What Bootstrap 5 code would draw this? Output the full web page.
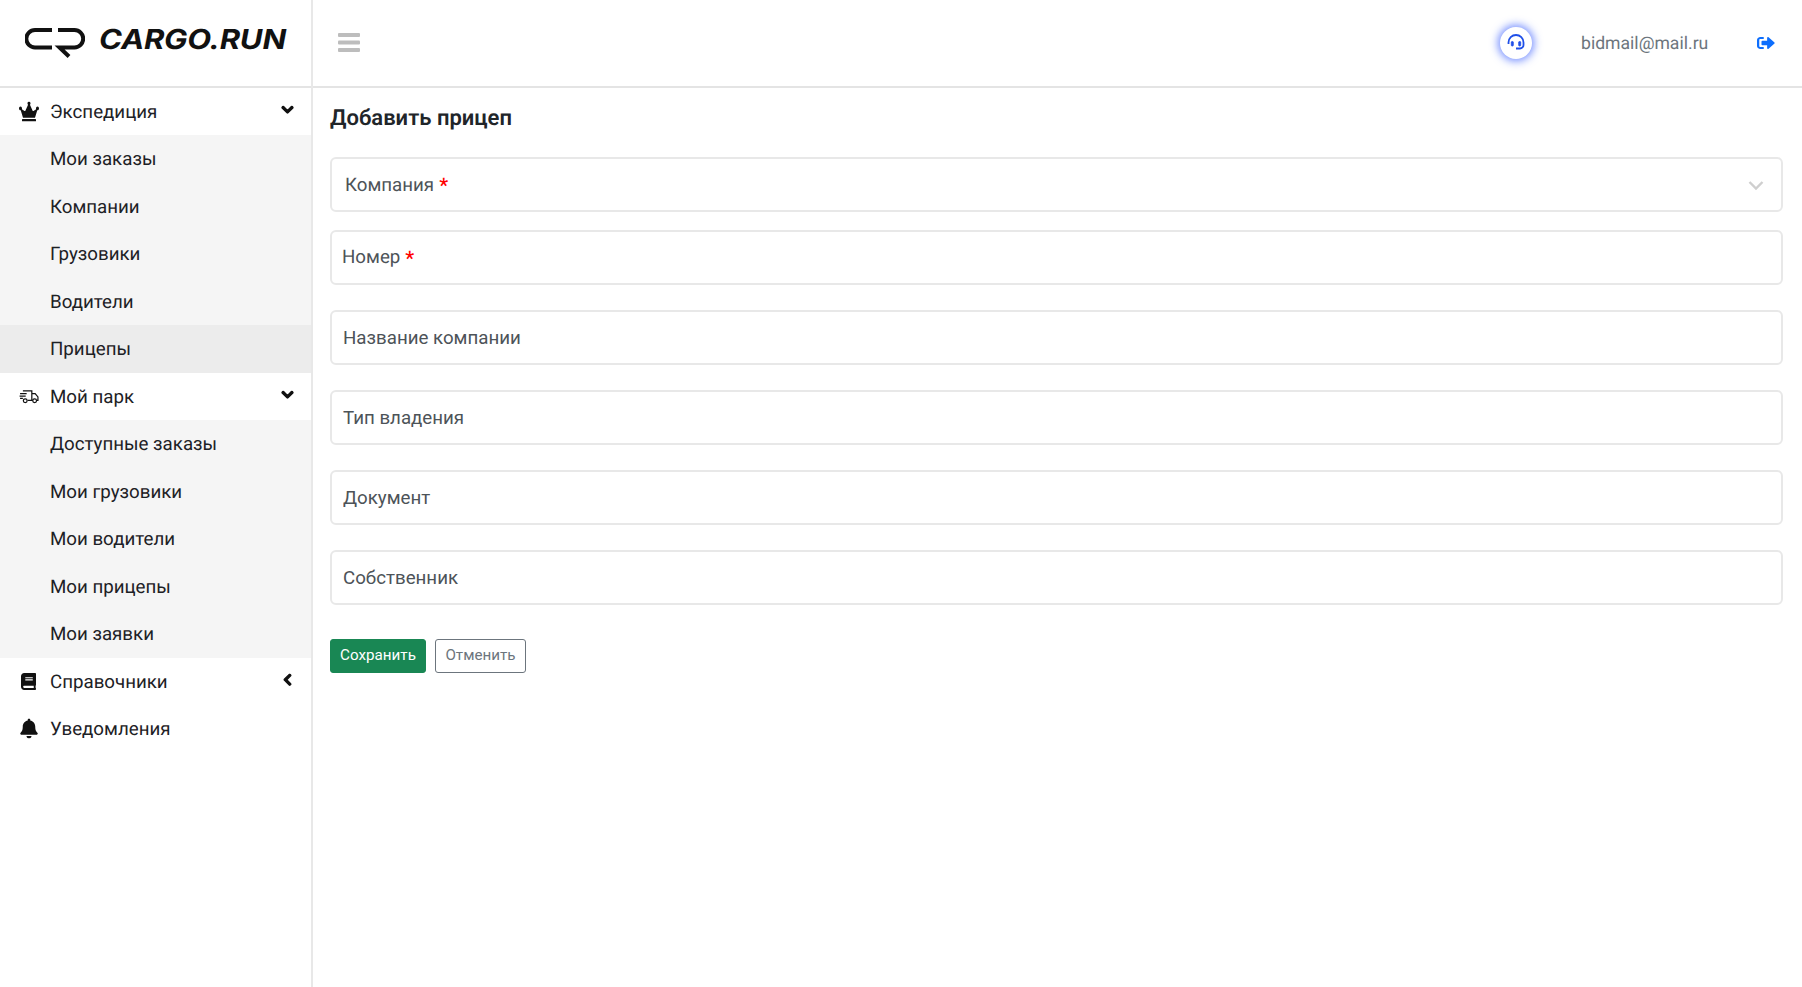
<!DOCTYPE html>
<html lang="ru">
<head>
<meta charset="utf-8">
<title>Добавить прицеп</title>
<link href="https://cdn.jsdelivr.net/npm/bootstrap@5.3.0/dist/css/bootstrap.min.css" rel="stylesheet">
<style>
html,body{height:100%}
body{font-family:Roboto,"Liberation Sans",sans-serif;font-size:18.72px;color:#212529;background:#fff;overflow:hidden;text-rendering:geometricPrecision}
.shell{min-height:987px}
.side{width:313px;flex:none;border-right:2px solid #e8e8e8}
.brand{height:88px;border-bottom:2px solid #e4e4e4;padding:0 0 0 25px;gap:14px}
.brand-text{font-family:Inter,sans-serif;font-weight:700;font-style:italic;font-size:27.5px;letter-spacing:-.2px;color:#111;line-height:1;display:inline-block;transform:scaleX(1.13);transform-origin:left center;margin-bottom:6px}
.brand-mark{margin-bottom:2px}
.side-nav{margin-top:-.5px}
.menu-link{height:47.5px;display:flex;align-items:center;color:#1d2125;text-decoration:none;position:relative;padding-left:50px;padding-top:1px}
.menu-ico{position:absolute;left:18px;top:50%;transform:translateY(-50%);width:21px;height:21px;display:flex;align-items:center;justify-content:center}
.menu-arrow{position:absolute;right:17px;top:50%;transform:translateY(-60%);display:flex}
.sub-wrap{background:#f5f5f5}
.sub-wrap .menu-link.is-active{background:#ececec}
.topbar{height:88px;border-bottom:2px solid #e4e4e4;padding:0 27px 0 25px}
.burger{width:22px;height:19px;margin-bottom:2px}
.help-dot{width:32px;height:32px;border-radius:50%;background:#fff;box-shadow:0 0 8px 2px rgba(40,80,255,.65)}
.user-mail{color:#6c757d;font-size:17.6px;width:127px;margin-left:49px;margin-right:49px;margin-top:2px;white-space:nowrap}
.form-zone{padding:0 19px 0 17px}
.page-title{font-size:22px;font-weight:600;color:#212529;margin:0;line-height:1;padding:20px 0 27px}
.fld{position:relative}
.fld-gap-a{margin-bottom:18px}
.fld-gap-b{margin-bottom:25px}
.fld-input{height:55px;border:2px solid #e8e8e8;border-radius:6px;font-size:18.72px;color:#495057;padding:0 11px}
.fld-input::placeholder{color:#4d5358}
.fld-select{height:55px;border:2px solid #e8e8e8;border-radius:6px;padding:0 14px;background-image:url("data:image/svg+xml,%3csvg xmlns='http://www.w3.org/2000/svg' viewBox='0 0 16 16'%3e%3cpath fill='none' stroke='%23cfcfcf' stroke-width='2.4' d='M1.5 5 8 11.5 14.5 5'/%3e%3c/svg%3e");background-size:16px 16px;background-position:right 17px center}
.fld-label{position:absolute;top:0;bottom:0;left:12px;display:flex;align-items:center;gap:5px;color:#4d5358;pointer-events:none;margin:0}
.fld-label.for-select{left:15px;padding-top:1px}
.req{color:#f00;font-size:20px;font-weight:500;line-height:1}
.btn-row{padding-top:9px;gap:9px}
.btn-save,.btn-cancel{height:34px;font-size:15.2px;padding:0;line-height:1;display:flex;align-items:center;border-radius:3px}
.btn-save{width:96px;justify-content:center;font-weight:400}
.btn-cancel{width:91px;justify-content:center;color:#6c757d;border:1.5px solid #6c757d;background:#fff}
</style>
</head>
<body>
<div class="shell d-flex">
  <aside class="side">
    <div class="brand d-flex align-items-center">
      <svg class="brand-mark" width="60" height="32" viewBox="0 0 60 32" fill="none" stroke="#111" stroke-width="4" aria-label="logo"><path d="M27 4H10a8.700 8.700 0 0 0 0 17.400H27"/><path d="M33 4H49.500a8.700 8.700 0 0 1 0 17.400H34.500L44 30.500"/></svg>
      <span class="brand-text">CARGO.RUN</span>
    </div>
    <nav class="nav flex-column side-nav">
      <a class="menu-link" href="#">
        <span class="menu-ico"><svg width="20" height="20" viewBox="0 0 640 512" fill="#111" preserveAspectRatio="none"><path d="M528 448H112c-8.800 0-16 7.200-16 16v32c0 8.800 7.200 16 16 16h416c8.800 0 16-7.200 16-16v-32c0-8.800-7.200-16-16-16zm64-320c-26.500 0-48 21.500-48 48 0 7.100 1.600 13.700 4.400 19.800L476 239.200c-15.400 9.200-35.300 4-44.200-11.600L350.300 85C361 76.200 368 63 368 48c0-26.500-21.500-48-48-48s-48 21.500-48 48c0 15 7 28.200 17.700 37l-81.500 142.600c-8.900 15.600-28.900 20.800-44.200 11.600l-72.300-43.400c2.700-6 4.400-12.700 4.400-19.800 0-26.500-21.500-48-48-48S0 149.500 0 176s21.500 48 48 48c2.600 0 5.200-.4 7.700-.8L128 416h384l72.300-192.800c2.500.4 5.100.8 7.700.8 26.500 0 48-21.500 48-48s-21.500-48-48-48z"/></svg></span>
        Экспедиция
        <span class="menu-arrow"><svg width="13" height="13" viewBox="0 0 448 512" fill="#111" stroke="#111" stroke-width="50"><path d="M207.029 381.476L12.686 187.132c-9.373-9.373-9.373-24.569 0-33.941l22.667-22.667c9.357-9.357 24.522-9.375 33.901-.04L224 284.505l154.745-154.021c9.379-9.335 24.544-9.317 33.901.04l22.667 22.667c9.373 9.373 9.373 24.569 0 33.941L240.971 381.476c-9.373 9.372-24.569 9.372-33.942 0z"/></svg></span>
      </a>
      <div class="sub-wrap">
        <a class="menu-link" href="#">Мои заказы</a>
        <a class="menu-link" href="#">Компании</a>
        <a class="menu-link" href="#">Грузовики</a>
        <a class="menu-link" href="#">Водители</a>
        <a class="menu-link is-active" href="#">Прицепы</a>
      </div>
      <a class="menu-link" href="#">
        <span class="menu-ico"><svg width="20" height="16" viewBox="0 0 21 17" fill="none" stroke="#111" stroke-width="1.300"><path d="M4 2.500H13.500V12.500H9M13.500 5.500H17L20 9V12.500H18.500M13.500 12.500H14.500"/><circle cx="6.500" cy="13" r="2"/><circle cx="16.500" cy="13" r="2"/><path d="M1 5.500H8M.5 8H7M1 10.500H4"/></svg></span>
        Мой парк
        <span class="menu-arrow"><svg width="13" height="13" viewBox="0 0 448 512" fill="#111" stroke="#111" stroke-width="50"><path d="M207.029 381.476L12.686 187.132c-9.373-9.373-9.373-24.569 0-33.941l22.667-22.667c9.357-9.357 24.522-9.375 33.901-.04L224 284.505l154.745-154.021c9.379-9.335 24.544-9.317 33.901.04l22.667 22.667c9.373 9.373 9.373 24.569 0 33.941L240.971 381.476c-9.373 9.372-24.569 9.372-33.942 0z"/></svg></span>
      </a>
      <div class="sub-wrap">
        <a class="menu-link" href="#">Доступные заказы</a>
        <a class="menu-link" href="#">Мои грузовики</a>
        <a class="menu-link" href="#">Мои водители</a>
        <a class="menu-link" href="#">Мои прицепы</a>
        <a class="menu-link" href="#">Мои заявки</a>
      </div>
      <a class="menu-link" href="#">
        <span class="menu-ico"><svg width="15" height="18" viewBox="0 0 448 512" fill="#111"><path d="M448 360V24c0-13.300-10.700-24-24-24H96C43 0 0 43 0 96v320c0 53 43 96 96 96h328c13.300 0 24-10.700 24-24v-16c0-7.500-3.500-14.300-8.900-18.700-4.200-15.400-4.200-59.300 0-74.700 5.400-4.300 8.900-11.100 8.900-18.600zM128 134c0-3.300 2.700-6 6-6h212c3.300 0 6 2.700 6 6v20c0 3.300-2.700 6-6 6H134c-3.300 0-6-2.700-6-6v-20zm0 64c0-3.300 2.700-6 6-6h212c3.300 0 6 2.700 6 6v20c0 3.300-2.700 6-6 6H134c-3.300 0-6-2.700-6-6v-20zm253.400 250H96c-17.700 0-32-14.300-32-32 0-17.600 14.400-32 32-32h285.400c-1.900 17.100-1.900 46.900 0 64z"/></svg></span>
        Справочники
        <span class="menu-arrow"><svg width="13" height="13" viewBox="0 0 320 512" fill="#111" stroke="#111" stroke-width="50"><path d="M34.520 239.030L228.870 44.690c9.370-9.370 24.570-9.370 33.940 0l22.670 22.670c9.360 9.360 9.370 24.520.04 33.900L131.490 256l154.020 154.750c9.340 9.380 9.320 24.540-.04 33.900l-22.670 22.670c-9.370 9.370-24.570 9.370-33.940 0L34.520 272.970c-9.370-9.370-9.370-24.570 0-33.940z"/></svg></span>
      </a>
      <a class="menu-link" href="#">
        <span class="menu-ico"><svg width="18" height="20" viewBox="0 0 448 512" fill="#111"><path d="M224 512c35.320 0 63.970-28.650 63.970-64H160.030c0 35.350 28.650 64 63.970 64zm215.390-149.710c-19.320-20.760-55.470-51.990-55.470-154.290 0-77.700-54.480-139.900-127.940-155.160V32c0-17.670-14.320-32-31.980-32s-31.980 14.330-31.980 32v20.840C118.560 68.100 64.080 130.300 64.080 208c0 102.300-36.150 133.530-55.470 154.290-6 6.450-8.660 14.160-8.610 21.710.11 16.400 12.980 32 32.100 32h383.800c19.120 0 32-15.600 32.100-32 .05-7.550-2.610-15.270-8.610-21.710z"/></svg></span>
        Уведомления
      </a>
    </nav>
  </aside>
  <main class="flex-grow-1">
    <header class="topbar d-flex align-items-center">
      <svg class="burger" viewBox="0 0 22 19" fill="#bdbdbd"><rect width="22" height="4" rx="1"/><rect y="7.500" width="22" height="4" rx="1"/><rect y="15" width="22" height="4" rx="1"/></svg>
      <div class="ms-auto d-flex align-items-center">
        <span class="help-dot d-flex align-items-center justify-content-center">
          <svg width="18" height="18" viewBox="0 0 18 18" fill="none" stroke="#1f4fe8" stroke-width="1.800"><path d="M1.500 10V8.500a7.500 7.500 0 0 1 15 0V11a3.500 3.500 0 0 1-3.500 3.500H9"/><rect x="4.300" y="7.500" width="2" height="4.500" rx=".8" fill="#1f4fe8" stroke-width=".8"/><rect x="11.700" y="7.500" width="2" height="4.500" rx=".8" fill="#1f4fe8" stroke-width=".8"/></svg>
        </span>
        <span class="user-mail">bidmail@mail.ru</span>
        <svg width="18" height="16" viewBox="0 0 512 512" fill="#0d6efd" preserveAspectRatio="none"><path d="M497 273L329 441c-15 15-41 4.500-41-17v-96H152c-13.300 0-24-10.700-24-24v-96c0-13.300 10.700-24 24-24h136V88c0-21.400 25.900-32 41-17l168 168c9.300 9.400 9.300 24.600 0 34zM192 436v-40c0-6.600-5.400-12-12-12H96c-17.700 0-32-14.300-32-32V160c0-17.700 14.300-32 32-32h84c6.600 0 12-5.400 12-12V76c0-6.600-5.400-12-12-12H96c-53 0-96 43-96 96v192c0 53 43 96 96 96h84c6.600 0 12-5.400 12-12z"/></svg>
      </div>
    </header>
    <section class="form-zone">
      <h1 class="page-title">Добавить прицеп</h1>
      <form>
        <div class="fld fld-gap-a">
          <select class="form-select fld-select" aria-label="Компания"><option></option></select>
          <span class="fld-label for-select">Компания <span class="req">*</span></span>
        </div>
        <div class="fld fld-gap-b">
          <input class="form-control fld-input" type="text" aria-label="Номер">
          <span class="fld-label">Номер <span class="req">*</span></span>
        </div>
        <div class="fld fld-gap-b"><input class="form-control fld-input" type="text" placeholder="Название компании"></div>
        <div class="fld fld-gap-b"><input class="form-control fld-input" type="text" placeholder="Тип владения"></div>
        <div class="fld fld-gap-b"><input class="form-control fld-input" type="text" placeholder="Документ"></div>
        <div class="fld fld-gap-b"><input class="form-control fld-input" type="text" placeholder="Собственник"></div>
        <div class="d-flex btn-row">
          <button type="button" class="btn btn-success btn-save">Сохранить</button>
          <button type="button" class="btn btn-cancel">Отменить</button>
        </div>
      </form>
    </section>
  </main>
</div>
</body>
</html>
